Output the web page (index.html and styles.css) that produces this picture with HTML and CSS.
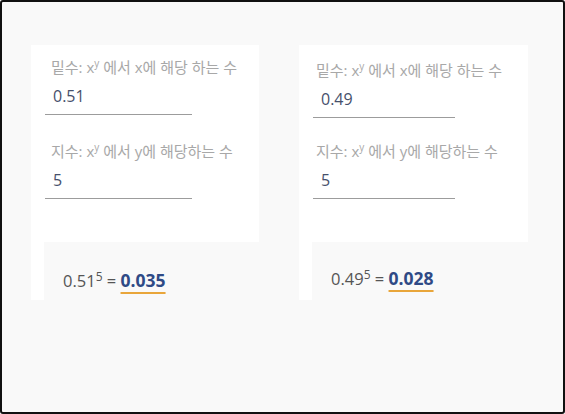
FILE: index.html
```html
<!DOCTYPE html>
<html lang="ko">
<head>
    <meta charset="UTF-8">
    <meta name="viewport" content="width=device-width, initial-scale=1.0">
    <title>거듭제곱 계산</title>
    <link rel="stylesheet" href="styles.css">
</head>
<body>

    <div class="frame">
        <div class="calc_row">

            <!-- first calculator -->
            <div class="calc">
                <div class="card">
                    <div class="field">
                        <label>밑수: x<sup>y</sup> 에서 x에 해당 하는 수</label>
                        <input type="text" value="0.51">
                    </div>
                    <div class="field">
                        <label>지수: x<sup>y</sup> 에서 y에 해당하는 수</label>
                        <input type="text" value="5">
                    </div>
                </div>
                <div class="result">
                    <p>0.51<sup>5</sup> = <span class="answer">0.035</span></p>
                </div>
            </div>

            <!-- second calculator -->
            <div class="calc calc-b">
                <div class="card">
                    <div class="field">
                        <label>밑수: x<sup>y</sup> 에서 x에 해당 하는 수</label>
                        <input type="text" value="0.49">
                    </div>
                    <div class="field">
                        <label>지수: x<sup>y</sup> 에서 y에 해당하는 수</label>
                        <input type="text" value="5">
                    </div>
                </div>
                <div class="result">
                    <p>0.49<sup>5</sup> = <span class="answer">0.028</span></p>
                </div>
            </div>

        </div>
    </div>

</body>
</html>
```

FILE: styles.css
```css
*{
    padding: 0;
    margin: 0;
    box-sizing: border-box;
}

body{
    background-color: #ffffff;
    font-family: "Open Sans", "Noto Sans CJK KR", sans-serif;
}

.frame{
    width: 565px;
    height: 414px;
    border: 2px solid #111;
    border-radius: 3px;
    background-color: #f9f9f9;
    padding: 43px 0 0 29px;
    overflow: hidden;
}

.calc_row{
    display: flex;
    align-items: flex-start;
    gap: 40px;
}

.calc{
    width: 228px;
    background-color: #fff;
}

.card{
    display: flex;
    flex-direction: column;
    gap: 26px;
    padding: 12px 0 43px 14px;
}

.field label{
    display: block;
    margin-left: 6px;
    font-size: 15px;
    line-height: 20px;
    color: #a8a8a8;
    white-space: nowrap;
}

.field label sup{
    font-size: 10px;
    line-height: 0;
}

.field input{
    display: block;
    width: 147px;
    height: 38px;
    padding: 0 8px;
    border: none;
    border-bottom: 1px solid #9c9c9c;
    background: transparent;
    font-family: "Open Sans", sans-serif;
    font-size: 16px;
    color: #46506c;
    outline: none;
}

.result{
    margin-left: 13px;
    margin-right: -40px;
    height: 58px;
    background-color: #f9f9f9;
    padding: 26px 0 0 19px;
}

.result p{
    font-size: 16.5px;
    line-height: 24px;
    color: #555;
}

.result sup{
    font-size: 12px;
    line-height: 0;
}

.answer{
    font-size: 17.5px;
    font-weight: 700;
    color: #2f4a86;
    text-decoration: underline;
    text-decoration-color: #e9a63b;
    text-decoration-thickness: 2px;
    text-underline-offset: 5px;
}

/* second calculator sits a little differently */
.calc-b{
    width: 229px;
}

.calc-b .card{
    gap: 23px;
    padding-top: 15px;
}

.calc-b .field label{
    margin-left: 3px;
}

.calc-b .field input{
    width: 142px;
}

.calc-b .result{
    margin-right: 0;
    padding-top: 24px;
}
```
